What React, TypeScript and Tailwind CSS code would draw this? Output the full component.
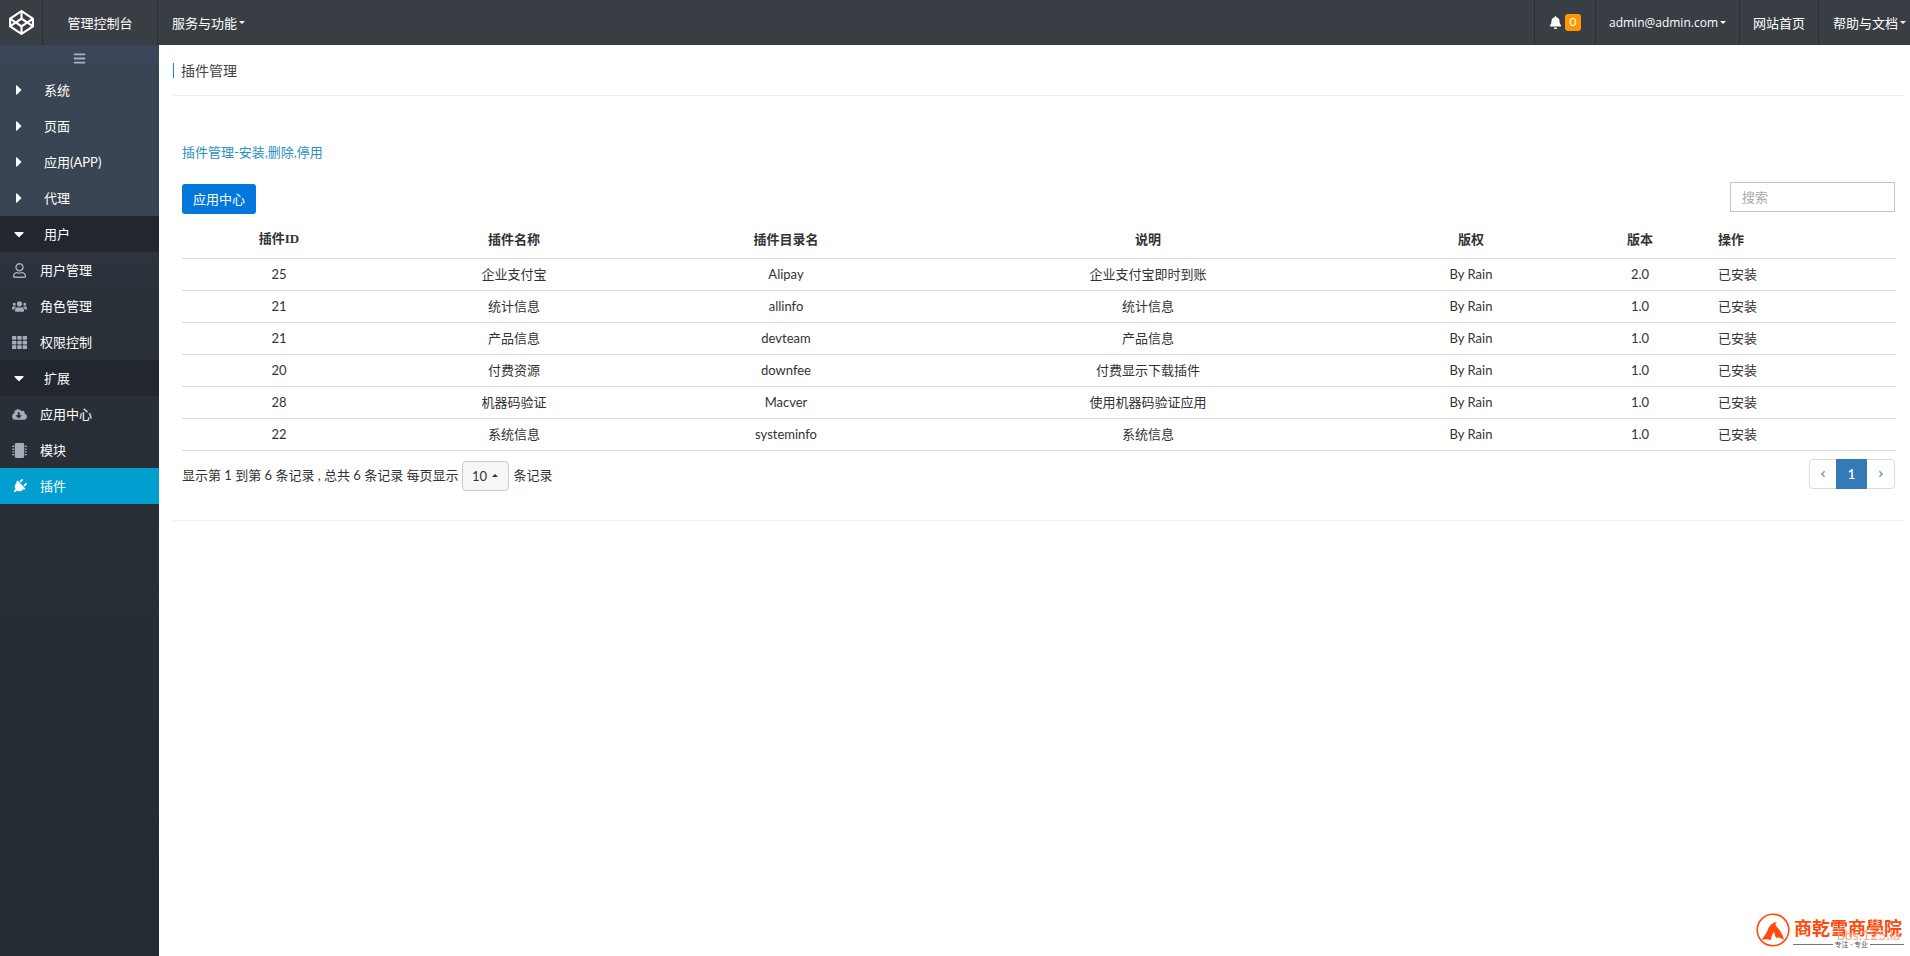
import { FaAngleLeft, FaAngleRight, FaBars, FaBell, FaCaretDown, FaCaretRight, FaCloudDownloadAlt, FaCodepen, FaMicrochip, FaPlug, FaRegUser, FaTh, FaUsers } from "react-icons/fa";

const rows = [
  { id: 25, name: "企业支付宝", dir: "Alipay", desc: "企业支付宝即时到账", ver: "2.0" },
  { id: 21, name: "统计信息", dir: "allinfo", desc: "统计信息", ver: "1.0" },
  { id: 21, name: "产品信息", dir: "devteam", desc: "产品信息", ver: "1.0" },
  { id: 20, name: "付费资源", dir: "downfee", desc: "付费显示下载插件", ver: "1.0" },
  { id: 28, name: "机器码验证", dir: "Macver", desc: "使用机器码验证应用", ver: "1.0" },
  { id: 22, name: "系统信息", dir: "systeminfo", desc: "系统信息", ver: "1.0" },
];

function Caret() {
  return <span className="ml-[2px] inline-block border-x-[3px] border-t-[3px] border-x-transparent border-t-white align-middle" />;
}

function Group({ label, open }: { label: string; open?: boolean }) {
  return (
    <div className={`flex h-9 items-center pl-[14px] text-white ${open ? "bg-[#22262e]" : ""}`}>
      {open ? <FaCaretDown className="w-[10px] text-[16px]" /> : <FaCaretRight className="w-[10px] text-[16px]" />}
      <span className="ml-[20px]">{label}</span>
    </div>
  );
}

function Item({ icon, label, active }: { icon: React.ReactNode; label: string; active?: boolean }) {
  return (
    <div className={`flex h-9 items-center pl-3 text-white ${active ? "bg-[#009fcf]" : ""}`}>
      <span className={`flex w-[15px] justify-center text-[15px] ${active ? "text-white" : "text-[#a3aebb]"}`}>{icon}</span>
      <span className="ml-[13px]">{label}</span>
    </div>
  );
}

export default function App() {
  return (
    <div className="flex h-[956px] w-[1910px] flex-col overflow-hidden bg-white font-['Lato','Noto_Sans_CJK_SC',sans-serif] text-[13px] leading-[20px] text-[#333]">
      <header className="flex h-[45px] shrink-0 items-stretch bg-[#393e44] text-white">
        <div className="flex w-[43px] items-center justify-center border-r border-[#2a2e33]">
          <FaCodepen className="text-[25px]" />
        </div>
        <div className="flex w-[115px] items-center justify-center border-r border-[#2a2e33]">管理控制台</div>
        <div className="flex items-center pl-[14px]">服务与功能<Caret /></div>
        <div className="ml-auto flex items-stretch whitespace-nowrap">
          <div className="flex w-[62px] items-center justify-center gap-[3px] border-x border-[#2a2e33] pb-[1px]">
            <FaBell className="text-[13px]" />
            <span className="flex h-[17px] w-4 items-center justify-center rounded-[3px] bg-[#ff9800] text-[12px] leading-none">0</span>
          </div>
          <div className="flex w-[144px] items-center justify-center border-r border-[#2a2e33] font-['Open_Sans'] text-[12px] font-medium">admin@admin.com<Caret /></div>
          <div className="flex w-[79px] items-center justify-center border-r border-[#2a2e33]">网站首页</div>
          <div className="flex w-[91px] items-center pl-[14px]">帮助与文档<Caret /></div>
        </div>
      </header>

      <div className="flex min-h-0 flex-1">
        <aside className="w-[159px] shrink-0 bg-[linear-gradient(180deg,#3b4659_0%,#2a3038_28%,#252b33_100%)]">
          <div className="flex h-[27px] items-center justify-center text-[#aab2bd]"><FaBars className="text-[13px]" /></div>
          <div className="bg-[#394552]">
            <Group label="系统" />
            <Group label="页面" />
            <Group label="应用(APP)" />
            <Group label="代理" />
          </div>
          <Group label="用户" open />
          <Item icon={<FaRegUser />} label="用户管理" />
          <Item icon={<FaUsers />} label="角色管理" />
          <Item icon={<FaTh />} label="权限控制" />
          <Group label="扩展" open />
          <Item icon={<FaCloudDownloadAlt />} label="应用中心" />
          <Item icon={<FaMicrochip />} label="模块" />
          <Item icon={<FaPlug className="rotate-45" />} label="插件" active />
        </aside>

        <main className="relative min-w-0 flex-1 pl-[14px] pr-[6px]">
          <div className="flex h-[51px] items-center border-b border-[#eee]">
            <h1 className="h-[15px] border-l border-[#0f8fc4] pl-[7px] text-[14px] leading-[15px] text-[#444]">插件管理</h1>
          </div>
          <div className="px-[9px]">
            <p className="mt-[46px] text-[#2a8fc4]">插件管理-安装,删除,停用</p>
            <div className="mt-[20px] flex items-start justify-between">
              <button className="mt-[2px] h-[30px] w-[74px] rounded-[3px] bg-[#0277dc] text-white">应用中心</button>
              <input placeholder="搜索" className="h-[30px] w-[165px] border border-[#c4c4c4] px-[11px] text-[13px] placeholder:text-[#aaa]" />
            </div>
            <table className="mt-[6px] w-[1713px] table-fixed border-collapse">
              <colgroup>
                <col className="w-[194px]" />
                <col className="w-[276px]" />
                <col className="w-[268px]" />
                <col className="w-[456px]" />
                <col className="w-[190px]" />
                <col className="w-[148px]" />
                <col className="w-[181px]" />
              </colgroup>
              <thead>
                <tr className="h-[38px] border-b border-[#ddd] font-bold">
                  <th>插件<span className="font-['Liberation_Serif']">ID</span></th>
                  <th>插件名称</th>
                  <th>插件目录名</th>
                  <th>说明</th>
                  <th>版权</th>
                  <th>版本</th>
                  <th className="pl-[4px] text-left">操作</th>
                </tr>
              </thead>
              <tbody>
                {rows.map((r) => (
                  <tr key={r.dir} className="h-[32px] border-b border-[#ddd] text-center">
                    <td>{r.id}</td>
                    <td>{r.name}</td>
                    <td>{r.dir}</td>
                    <td>{r.desc}</td>
                    <td>By Rain</td>
                    <td>{r.ver}</td>
                    <td className="pl-[4px] text-left">已安装</td>
                  </tr>
                ))}
              </tbody>
            </table>
            <div className="mt-[8px] flex items-start justify-between">
              <div className="flex items-center">
                <span>显示第 1 到第 6 条记录 , 总共 6 条记录 每页显示</span>
                <span className="ml-[3px] mr-[5px] mt-[2px] flex h-[30px] w-[47px] items-center justify-center gap-[5px] rounded-[4px] border border-[#ccc] bg-[#f6f6f6]">
                  10
                  <span className="inline-block border-x-[3px] border-b-[3px] border-x-transparent border-b-[#333]" />
                </span>
                <span>条记录</span>
              </div>
              <div className="flex h-[30px] w-[86px] rounded-[4px] border border-[#ddd] text-[#6f9fc8]">
                <span className="flex w-[26px] items-center justify-center"><FaAngleLeft className="text-[10px]" /></span>
                <span className="-my-px flex w-[31px] items-center justify-center bg-[#337ab7] font-semibold text-white">1</span>
                <span className="flex flex-1 items-center justify-center"><FaAngleRight className="text-[10px]" /></span>
              </div>
            </div>
          </div>
          <div className="mt-[29px] border-b border-[#f2f2f2]" />

          <div className="absolute right-[4px] top-[868px] h-[40px] w-[150px] text-[#ff4a0e]">
            <svg viewBox="0 0 34 34" className="absolute left-0 top-0 h-[34px] w-[34px]">
              <circle cx="17" cy="17" r="15.8" fill="none" stroke="currentColor" strokeWidth="1.6" />
              <path d="M6 27c2-5 4-5 6-11 2-4 5-7 9-7-2 2-2 3 0 5 3 3 6 8 7 13-3-2-5-3-8-2l-2-6c-2 2-3 6-3 8-3-1-6-1-9 0z" fill="currentColor" />
            </svg>
            <span className="absolute left-[38px] top-[2px] whitespace-nowrap font-['Noto_Sans_CJK_SC',serif] text-[18px] leading-[24px] font-bold">商乾雪商學院</span>
            <span className="absolute left-[81px] top-[14px] text-[14px] leading-[16px] text-[#ffa98a]">bbs.125.la</span>
            <div className="absolute left-[37px] right-[2px] top-[27px] flex items-center gap-[2px]">
              <span className="h-px flex-1 bg-[#777]" />
              <span className="text-[7px] leading-[8px] text-[#555]">专注 · 专业</span>
              <span className="h-px w-[34px] bg-[#777]" />
            </div>
          </div>
        </main>
      </div>
    </div>
  );
}
